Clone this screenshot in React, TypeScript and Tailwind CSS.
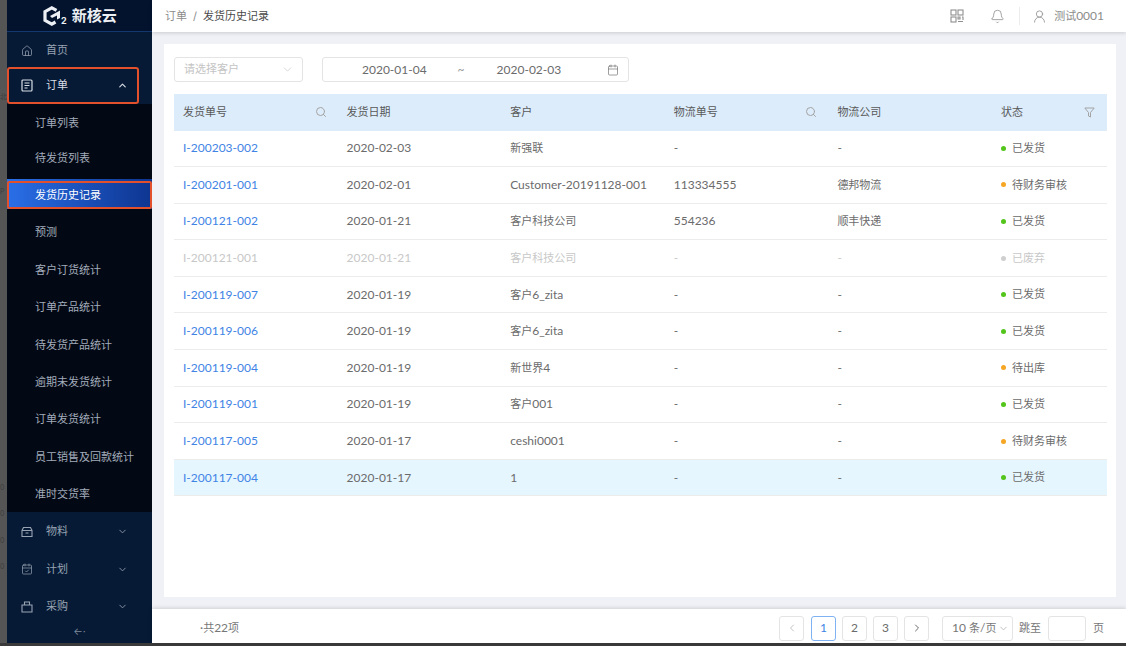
import type { ReactNode } from "react";
import { Home, ChevronUp, ChevronDown, CalendarCheck, Search, Calendar, Bell, UserRound, ChevronLeft, ChevronRight } from "lucide-react";

const font = "font-['Inter','Noto_Sans_CJK_SC',sans-serif]";

const subTop = ["订单列表", "待发货列表"];
const subBottom = ["预测", "客户订货统计", "订单产品统计", "待发货产品统计", "逾期未发货统计", "订单发货统计", "员工销售及回款统计", "准时交货率"];

const rows = [
  ["I-200203-002", "2020-02-03", "新强联", "-", "-", "已发货", "g"],
  ["I-200201-001", "2020-02-01", "Customer-20191128-001", "113334555", "德邦物流", "待财务审核", "o"],
  ["I-200121-002", "2020-01-21", "客户科技公司", "554236", "顺丰快递", "已发货", "g"],
  ["I-200121-001", "2020-01-21", "客户科技公司", "-", "-", "已废弃", "x"],
  ["I-200119-007", "2020-01-19", "客户6_zita", "-", "-", "已发货", "g"],
  ["I-200119-006", "2020-01-19", "客户6_zita", "-", "-", "已发货", "g"],
  ["I-200119-004", "2020-01-19", "新世界4", "-", "-", "待出库", "o"],
  ["I-200119-001", "2020-01-19", "客户001", "-", "-", "已发货", "g"],
  ["I-200117-005", "2020-01-17", "ceshi0001", "-", "-", "待财务审核", "o"],
  ["I-200117-004", "2020-01-17", "1", "-", "-", "已发货", "g"],
];

// Latin runs are 12px, Chinese runs 11px, as in the reference.
function Mix({ t }: { t: string }) {
  const parts = t.match(/[\u4e00-\u9fff]+|[^\u4e00-\u9fff]+/g) ?? [];
  return (
    <>
      {parts.map((p, i) =>
        /[\u4e00-\u9fff]/.test(p) ? (
          <span key={i}>{p}</span>
        ) : (
          <span key={i} className="font-['Lato',sans-serif] text-[12px]">{p}</span>
        )
      )}
    </>
  );
}

function OrderIcon() {
  return (
    <svg width="12" height="13" viewBox="0 0 12 13" fill="none" stroke="currentColor" strokeWidth="1.2">
      <rect x="1" y="1" width="10" height="11" rx="1" />
      <path d="M3.5 4h5M3.5 6.5h5M3.5 9h3" />
    </svg>
  );
}

function BoxIcon() {
  return (
    <svg width="12" height="12" viewBox="0 0 12 12" fill="none" stroke="currentColor" strokeWidth="1.1">
      <path d="M2.5 1.5h7l1.5 3v6h-10v-6z" />
      <path d="M1 4.5h10M4.5 7h3" />
    </svg>
  );
}

function BagIcon() {
  return (
    <svg width="12" height="12" viewBox="0 0 12 12" fill="none" stroke="currentColor" strokeWidth="1.1">
      <path d="M1 4h10v7H1z" />
      <path d="M3.5 4V1h5v3" />
    </svg>
  );
}

function QrIcon() {
  return (
    <svg width="14" height="14" viewBox="0 0 14 14" fill="none" stroke="currentColor" strokeWidth="1.1">
      <rect x="1" y="1" width="5" height="5" />
      <rect x="8" y="1" width="5" height="5" />
      <rect x="1" y="8" width="5" height="5" />
      <path d="M8 8h2v2H8zM12 8h1v3M8 12.5h5" />
    </svg>
  );
}

function Logo() {
  return (
    <div className="flex h-[32px] shrink-0 items-center border-b border-[#12386f] bg-[#03132e] pl-[36px] text-[#eceff4]">
      <svg width="18" height="20" viewBox="0 0 18 20" fill="none">
        <path d="M13.5 4.4 L8.8 1.9 L2 5.6 V14.4 L8.8 18.1 L12.5 16" stroke="currentColor" strokeWidth="3.2" />
        <path d="M17 4.5 V12 L14 13.5 V9.5 L9 12 L7 10 Z" fill="currentColor" />
      </svg>
      <span className="mt-[10px] ml-[0px] text-[9px] leading-none font-bold">2</span>
      <span className="ml-[5px] text-[15px] leading-none font-bold">新核云</span>
    </div>
  );
}

function NavItem({ icon, label, h, chevron, boxed }: { icon: ReactNode; label: string; h: string; chevron?: "up" | "down"; boxed?: boolean }) {
  return (
    <div className={`flex shrink-0 items-center pl-[12px] pr-[24px] text-[11px] ${h} ${boxed ? "text-[#d8dde6]" : "text-[#98a3b3]"}`}>
      <span className="flex w-[16px] justify-center">{icon}</span>
      <span className="ml-[11px] flex-1">{label}</span>
      {chevron === "up" && <ChevronUp size={11} strokeWidth={2.5} className="text-[#d8dde6]" />}
      {chevron === "down" && <ChevronDown size={11} strokeWidth={2} className="text-[#8d98aa]" />}
    </div>
  );
}

function SubItem({ label, h }: { label: string; h: string }) {
  return <div className={`flex shrink-0 items-center pt-[2px] pl-[28px] text-[11px] text-[#a3acba] ${h}`}>{label}</div>;
}

function Sidebar() {
  return (
    <aside className="flex h-[643px] w-[145px] shrink-0 flex-col bg-[#061a35]">
      <Logo />
      <NavItem h="h-[35px] pt-[2px]" label="首页" icon={<Home size={12} strokeWidth={1.5} />} />
      <div className="relative">
        <NavItem h="h-[37px] pb-[1px]" label="订单" boxed chevron="up" icon={<OrderIcon />} />
        <div className="absolute top-0 left-0 h-[37px] w-[132px] rounded-[3px] border-2 border-[#e2512b]" />
      </div>
      <div className="flex h-[408px] shrink-0 flex-col overflow-hidden bg-[#020814]">
        {subTop.map((s) => <SubItem key={s} label={s} h="h-[35.5px]" />)}
        <div className="relative mt-[4px] mb-[4px] flex h-[30px] shrink-0 items-center pt-[2px] bg-gradient-to-r from-[#2a6fe8] to-[#0e3591] pl-[28px] text-[11px] text-white">
          发货历史记录
          <div className="absolute top-[2px] left-0 h-[28px] w-full rounded-[2px] border-2 border-[#e2512b]" />
        </div>
        {subBottom.map((s) => <SubItem key={s} label={s} h="h-[37.4px]" />)}
      </div>
      <NavItem h="h-[37px] pt-[2px]" label="物料" chevron="down" icon={<BoxIcon />} />
      <NavItem h="h-[38px] pt-[2px]" label="计划" chevron="down" icon={<CalendarCheck size={12} strokeWidth={1.4} />} />
      <NavItem h="h-[37px] pt-[2px]" label="采购" chevron="down" icon={<BagIcon />} />
      <div className="flex flex-1 items-center justify-center pb-[6px] text-[10px] leading-none text-[#7f8b9d]">←·</div>
    </aside>
  );
}

function Header() {
  return (
    <header className="z-10 flex h-[32px] shrink-0 items-center bg-white pl-[13px] pr-[22px] text-[11px] shadow-[0_1px_4px_rgba(0,0,0,0.16)]">
      <span className="text-[#8c8c8c]">订单</span>
      <span className="mx-[6px] text-[#8c8c8c]">/</span>
      <span className="text-[#4a4a4a]">发货历史记录</span>
      <div className="ml-auto flex items-center text-[#8f8f8f]">
        <QrIcon />
        <Bell size={15} strokeWidth={1.3} className="ml-[26px]" />
        <span className="ml-[14px] h-[18px] w-px bg-[#ececec]" />
        <UserRound size={15} strokeWidth={1.3} className="ml-[12px]" />
        <span className="ml-[7px] text-[#8c8c8c]"><Mix t="测试0001" /></span>
      </div>
    </header>
  );
}

const cols = "grid grid-cols-[163.6px_163.6px_163.6px_163.6px_163.6px_1fr] items-center";

function Table() {
  return (
    <div className="mt-[12px] text-[11px]">
      <div className={`${cols} h-[36.5px] bg-[#dcecfb] text-[#595959]`}>
        <div className="flex items-center justify-between pl-[9px] pr-[11px]">发货单号<Search size={12} className="text-[#a3a3a3]" /></div>
        <div className="pl-[9px]">发货日期</div>
        <div className="pl-[9px]">客户</div>
        <div className="flex items-center justify-between pl-[9px] pr-[11px]">物流单号<Search size={12} className="text-[#a3a3a3]" /></div>
        <div className="pl-[9px]">物流公司</div>
        <div className="flex items-center justify-between pl-[9px] pr-[12px]">
          状态
          <svg width="11" height="11" viewBox="0 0 11 11" fill="none" stroke="#a3a3a3" strokeWidth="1">
            <path d="M0.8 1h9.4L6.5 5.5V10L4.5 9V5.5z" />
          </svg>
        </div>
      </div>
      {rows.map((r, i) => {
        const off = r[6] === "x";
        const txt = off ? "text-[#c8c8c8]" : "text-[#6b6b6b]";
        return (
          <div key={i} className={`${cols} h-[36.6px] border-b border-[#ececec] ${i === 9 ? "bg-[#e6f6ff]" : ""} ${txt}`}>
            <div className={`pl-[9px] ${off ? "" : "text-[#3f84e5]"}`}><Mix t={r[0]} /></div>
            <div className="pl-[9px]"><Mix t={r[1]} /></div>
            <div className="pl-[9px]"><Mix t={r[2]} /></div>
            <div className="pl-[9px]"><Mix t={r[3]} /></div>
            <div className="pl-[9px]"><Mix t={r[4]} /></div>
            <div className="flex items-center pl-[9px]">
              <span className={`mr-[6px] h-[5px] w-[5px] rounded-full ${r[6] === "g" ? "bg-[#52c41a]" : r[6] === "o" ? "bg-[#f5a623]" : "bg-[#cfcfcf]"}`} />
              {r[5]}
            </div>
          </div>
        );
      })}
    </div>
  );
}

function Page({ children, active }: { children: ReactNode; active?: boolean }) {
  return (
    <div className={`flex h-[25px] w-[25px] items-center justify-center rounded-[3px] border text-[11px] ${active ? "border-[#7fb2f2] text-[#3f84e5]" : "border-[#e4e4e4] text-[#6b6b6b]"}`}>
      {children}
    </div>
  );
}

function Footer() {
  return (
    <footer className="z-10 flex h-[34px] shrink-0 items-center bg-white pt-[4px] pl-[48px] pr-[22px] text-[11px] text-[#777] shadow-[0_-1px_4px_rgba(0,0,0,0.14)]">
      <span><Mix t="·" /><span>共</span><Mix t="22" /><span>项</span></span>
      <div className="ml-auto flex items-center gap-[6px]">
        <div className="mr-[1px]"><Page><ChevronLeft size={12} className="text-[#c4c4c4]" /></Page></div>
        <Page active><Mix t="1" /></Page>
        <Page><Mix t="2" /></Page>
        <Page><Mix t="3" /></Page>
        <Page><ChevronRight size={12} /></Page>
        <div className="ml-[7px] flex h-[25px] w-[71px] items-center justify-between rounded-[3px] border border-[#e4e4e4] pl-[9px] pr-[3px]"><span><Mix t="10 条/页" /></span><ChevronDown size={11} className="text-[#bbb]" /></div>
        <span>跳至</span>
        <div className="ml-[1px] h-[25px] w-[38px] rounded-[3px] border border-[#e4e4e4]" />
        <span className="ml-[1px]">页</span>
      </div>
    </footer>
  );
}

function Strip() {
  return (
    <div className="flex w-[7px] shrink-0 flex-col overflow-hidden bg-[#555555] text-[7px] leading-none text-[#3f3f3f]">
      <span className="mt-[93px] shrink-0">北</span>
      <span className="mt-[88px] shrink-0">P</span>
      <span className="mt-[289px] shrink-0">0</span>
      <span className="mt-[19.4px] shrink-0">0</span>
      <span className="mt-[19.4px] shrink-0">0</span>
      <span className="mt-[19.4px] shrink-0">0</span>
    </div>
  );
}

export default function App() {
  return (
    <div className={`${font} h-[646px] w-[1126px] overflow-hidden bg-[#3a3a3a]`}>
      <div className="flex h-[643px]">
        <Strip />
        <Sidebar />
        <main className="flex min-w-0 flex-1 flex-col bg-[#eff1f6]">
          <Header />
          <div className="min-h-0 flex-1 pt-[12px] pr-[10px] pb-[12px] pl-[12px]">
            <div className="h-full bg-white pt-[13px] pr-[9px] pl-[10px]">
              <div className="flex items-center gap-[19px]">
                <div className="flex h-[25px] w-[129px] items-center justify-between rounded-[3px] border border-[#e4e4e4] pl-[9px] pr-[8px] text-[11px] text-[#c4c4c4]">
                  请选择客户<ChevronDown size={13} strokeWidth={1.2} />
                </div>
                <div className="flex h-[25px] w-[307px] items-center rounded-[3px] border border-[#e4e4e4] pl-[39px] pr-[9px] text-[11px] text-[#6b6b6b]">
                  <Mix t="2020-01-04" />
                  <span className="ml-[31px] text-[#999]"><Mix t="~" /></span>
                  <span className="ml-[32px]"><Mix t="2020-02-03" /></span>
                  <Calendar size={12} strokeWidth={1.3} className="ml-auto" />
                </div>
              </div>
              <Table />
            </div>
          </div>
          <Footer />
        </main>
      </div>
    </div>
  );
}
